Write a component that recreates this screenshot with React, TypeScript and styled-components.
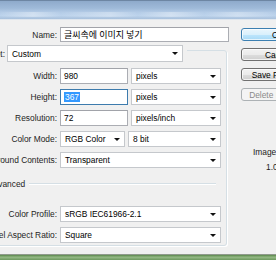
import React from 'react';
import styled, { createGlobalStyle } from 'styled-components';

const GlobalStyle = createGlobalStyle`
  *, *::before, *::after {
    box-sizing: border-box;
  }

  html, body {
    margin: 0;
    padding: 0;
    background: #f0f0f0;
  }
`;

const Window = styled.div`
  width: 276px;
  height: 260px;
  overflow: hidden;
  display: flex;
  flex-direction: column;
  font-family: 'Liberation Sans', Arial, 'Noto Sans CJK KR', sans-serif;
  font-size: 8.4px;
  color: #1b1b1b;
`;

const TitleBar = styled.div`
  height: 20px;
  flex-shrink: 0;
  border-top: 1px solid #6d86a3;
  border-bottom: 1px solid #dfe6ee;
  background:
    linear-gradient(90deg, rgba(255,255,255,0) 0, rgba(255,255,255,.35) 12%, rgba(255,255,255,0) 22%,
      rgba(255,255,255,.3) 40%, rgba(255,255,255,0) 50%, rgba(255,255,255,.35) 62%, rgba(255,255,255,0) 74%,
      rgba(255,255,255,.3) 86%, rgba(255,255,255,0) 100%) 0 11px / 100% 5px no-repeat,
    linear-gradient(#8eaacb 0, #9fbad9 40%, #b3cbe6 62%, #bcd3ec 80%, #a9c1dc 100%);
`;

const Body = styled.div`
  flex: 1;
  display: flex;
  background: #f0f0f0;
`;

const Form = styled.div`
  flex-shrink: 0;
  width: 300px;
  margin-left: -64px;
  padding-top: 7px;
  display: flex;
  flex-direction: column;
`;

const Label = styled.span<{ $w: number }>`
  flex-shrink: 0;
  width: ${p => p.$w}px;
  text-align: right;
  white-space: nowrap;
  color: #1e1e1e;
`;

const NameRow = styled.div`
  display: flex;
  align-items: center;
  gap: 3px;
  height: 15px;
`;

const PresetRow = styled.div`
  position: relative;
  z-index: 1;
  display: flex;
  align-items: center;
  gap: 2px;
  width: 251px;
  height: 17px;
  margin-top: 3px;
  margin-bottom: -12px;
  background: #f0f0f0;
`;

const Group = styled.div`
  width: 281px;
  margin-left: 10px;
  padding: 17px 0 2px;
  display: flex;
  flex-direction: column;
  gap: 5px;
  border: 1px solid #d5dfe5;
  border-radius: 3px;
  box-shadow: 1px 1px 0 #fff;
`;

const Row = styled.div<{ $mt?: number }>`
  display: flex;
  align-items: center;
  gap: 3px;
  height: 16px;
  margin-top: ${p => p.$mt || 0}px;
`;

const TextBox = styled.div<{ $w: number; $focus?: boolean }>`
  width: ${p => p.$w}px;
  height: 100%;
  display: flex;
  align-items: center;
  padding: 0 3px;
  background: #fff;
  border: 1px solid ${p => (p.$focus ? '#3d7bad' : '#abadb3')};
  border-top-color: ${p => (p.$focus ? '#3d7bad' : '#a1a3a9')};
  color: #000;
  white-space: nowrap;
  overflow: hidden;
`;

const KoreanText = styled.span`
  font-family: 'Noto Sans CJK KR', 'Liberation Sans', sans-serif;
  font-size: 9px;
`;

const Selected = styled.span`
  display: inline-block;
  line-height: 10px;
  padding: 0 1px;
  background: #3399ff;
  color: #fff;
`;

const SelectBox = styled.div<{ $w: number }>`
  width: ${p => p.$w}px;
  height: 100%;
  display: flex;
  align-items: center;
  justify-content: space-between;
  padding: 0 4px;
  background: #fff;
  border: 1px solid #c5c8cc;
  color: #000;
  white-space: nowrap;
`;

const Caret = styled.span`
  width: 0;
  height: 0;
  border-left: 3px solid transparent;
  border-right: 3px solid transparent;
  border-top: 3px solid #111;
`;

const Legend = styled.div`
  display: flex;
  align-items: center;
  gap: 4px;
  height: 12px;
  margin-top: 5px;
  padding: 0 10px 0 41px;
`;

const LegendLine = styled.span`
  flex: 1;
  height: 2px;
  border-top: 1px solid #d5dfe5;
  border-bottom: 1px solid #fff;
`;

const Side = styled.div`
  flex-shrink: 0;
  width: 79px;
  padding: 8px 0 0 5px;
  display: flex;
  flex-direction: column;
  gap: 7px;
`;

const Button = styled.div<{ $kind?: 'default' | 'disabled' }>`
  width: 74px;
  height: 13px;
  display: flex;
  align-items: center;
  justify-content: center;
  border-radius: 3px;
  white-space: nowrap;
  border: 1px solid ${p => (p.$kind === 'default' ? '#3c7fb1' : p.$kind === 'disabled' ? '#adb2b5' : '#707070')};
  color: ${p => (p.$kind === 'disabled' ? '#8a8a8a' : '#000')};
  background: ${p =>
    p.$kind === 'default'
      ? 'linear-gradient(#eaf6fd 0, #d9f0fc 50%, #bee6fd 51%, #a7d9f5 100%)'
      : p.$kind === 'disabled'
        ? '#f4f4f4'
        : 'linear-gradient(#f2f2f2 0, #ebebeb 50%, #dddddd 51%, #cfcfcf 100%)'};
  box-shadow: ${p => (p.$kind === 'disabled' ? 'none' : 'inset 0 0 0 1px rgba(255,255,255,.7)')};
`;

const Info = styled.div`
  margin-top: 38px;
  padding-left: 12px;
  display: flex;
  flex-direction: column;
  gap: 3px;
  line-height: 12px;
  white-space: nowrap;
`;

const InfoValue = styled.span`
  padding-left: 13px;
`;

const Taskbar = styled.div`
  height: 6px;
  flex-shrink: 0;
  border-top: 1px solid #8f9a8c;
  background: linear-gradient(#5a874b 0, #94b984 45%, #6c985e 100%);
`;

function Select ({ value, width }: { value: string; width: number }) {
  return (
    <SelectBox $w={width}>
      <span>{value}</span>
      <Caret />
    </SelectBox>
  );
}

export default function App () {
  return (
    <>
      <GlobalStyle />
      <Window>
        <TitleBar />
        <Body>
          <Form>
            <NameRow>
              <Label $w={121}>Name:</Label>
              <TextBox $w={169}>
                <KoreanText>글씨속에 이미지 넣기</KoreanText>
              </TextBox>
            </NameRow>
            <PresetRow>
              <Label $w={69}>Preset:</Label>
              <Select value='Custom' width={176} />
            </PresetRow>
            <Group>
              <Row>
                <Label $w={110}>Width:</Label>
                <TextBox $w={68}>980</TextBox>
                <Select value='pixels' width={90} />
              </Row>
              <Row>
                <Label $w={110}>Height:</Label>
                <TextBox $w={68} $focus>
                  <Selected>367</Selected>
                </TextBox>
                <Select value='pixels' width={90} />
              </Row>
              <Row>
                <Label $w={110}>Resolution:</Label>
                <TextBox $w={68}>72</TextBox>
                <Select value='pixels/inch' width={90} />
              </Row>
              <Row>
                <Label $w={110}>Color Mode:</Label>
                <Select value='RGB Color' width={65} />
                <Select value='8 bit' width={93} />
              </Row>
              <Row>
                <Label $w={110}>Background Contents:</Label>
                <Select value='Transparent' width={161} />
              </Row>
              <Legend>
                <span>Advanced</span>
                <LegendLine />
              </Legend>
              <Row $mt={11}>
                <Label $w={110}>Color Profile:</Label>
                <Select value='sRGB IEC61966-2.1' width={161} />
              </Row>
              <Row>
                <Label $w={110}>Pixel Aspect Ratio:</Label>
                <Select value='Square' width={161} />
              </Row>
            </Group>
          </Form>
          <Side>
            <Button $kind='default'>OK</Button>
            <Button>Cancel</Button>
            <Button>Save Preset...</Button>
            <Button $kind='disabled'>Delete Preset...</Button>
            <Info>
              <span>Image Size:</span>
              <InfoValue>1.03M</InfoValue>
            </Info>
          </Side>
        </Body>
        <Taskbar />
      </Window>
    </>
  );
}
